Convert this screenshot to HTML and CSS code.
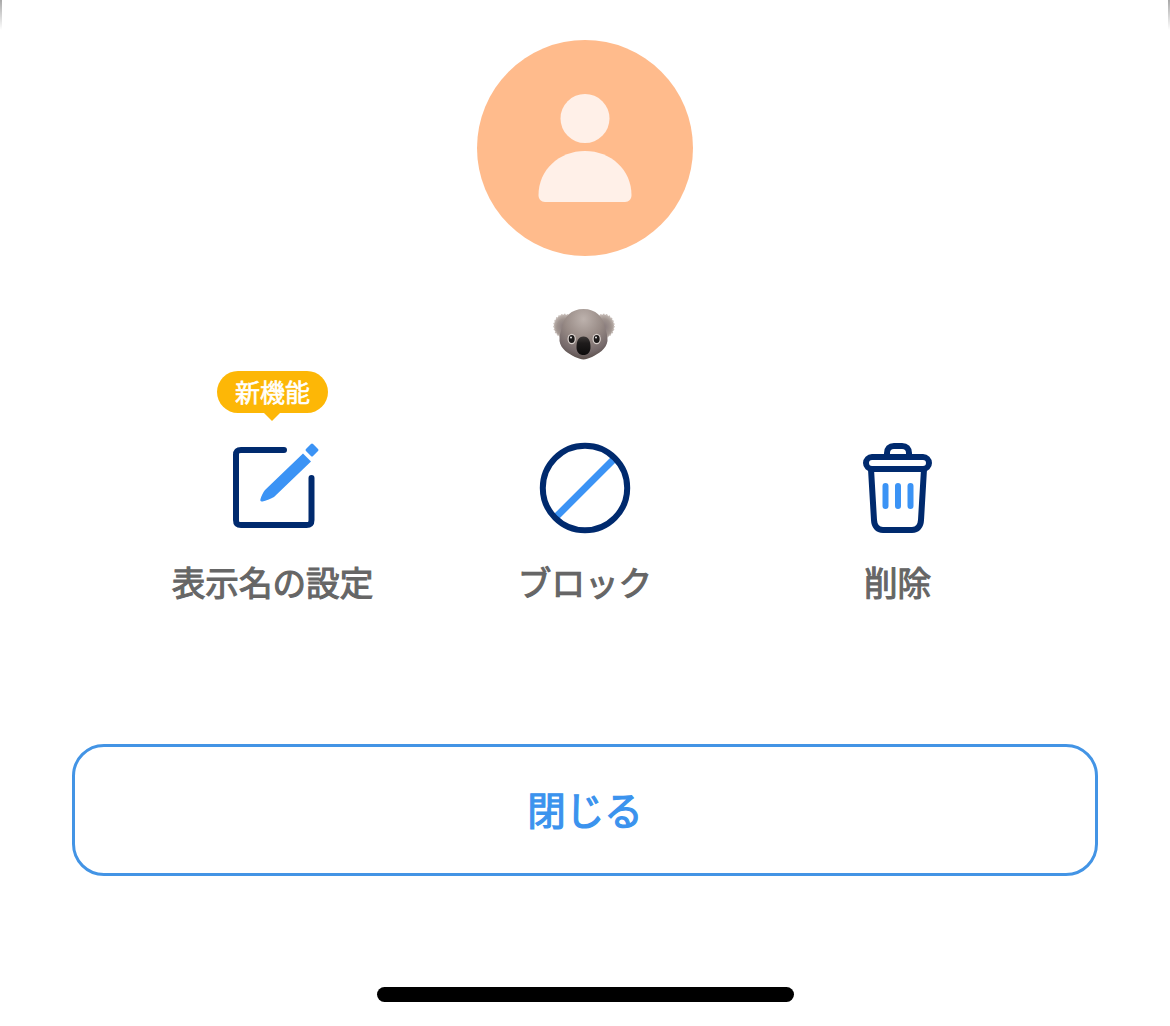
FILE: index.html
```html
<!DOCTYPE html>
<html lang="ja">
<head>
<meta charset="utf-8">
<title>プロフィール</title>
<link rel="stylesheet" href="styles.css">
</head>
<body>
<main class="sheet">
  <div class="avatar">
    <svg class="avatar-person" viewBox="0 0 96 112" aria-hidden="true">
      <circle cx="48" cy="26.500" r="24.500"/>
      <path d="M1.500 103C1.500 78 22 59 48 59C74 59 94.500 78 94.500 103C94.500 107 92 110 88 110H8C4 110 1.500 107 1.500 103Z"/>
    </svg>
  </div>

  <div class="name" role="img" aria-label="コアラ">
    <svg class="koala" viewBox="0 0 62 54" aria-hidden="true">
      <defs>
        <radialGradient id="head" cx="50%" cy="20%" r="78%">
          <stop offset="0" stop-color="#bdb2ad"/>
          <stop offset="0.5" stop-color="#988b86"/>
          <stop offset="0.85" stop-color="#75696a"/>
          <stop offset="1" stop-color="#5f5450"/>
        </radialGradient>
        <radialGradient id="ear" cx="50%" cy="55%" r="60%">
          <stop offset="0" stop-color="#85787a"/>
          <stop offset="0.6" stop-color="#a0948f"/>
          <stop offset="1" stop-color="#c9c0bb"/>
        </radialGradient>
        <linearGradient id="nose" x1="0" y1="0" x2="0" y2="1">
          <stop offset="0" stop-color="#3d3938"/>
          <stop offset="0.35" stop-color="#1f1c1c"/>
          <stop offset="1" stop-color="#0c0b0b"/>
        </linearGradient>
      </defs>
      <ellipse cx="11.500" cy="18" rx="10.500" ry="11.500" fill="url(#ear)" stroke="#c4bab5" stroke-width="1.500" stroke-dasharray="1.500 1.500"/>
      <ellipse cx="50.500" cy="18" rx="10.500" ry="11.500" fill="url(#ear)" stroke="#c4bab5" stroke-width="1.500" stroke-dasharray="1.500 1.500"/>
      <path d="M30.500 1C43 1 50 9 52 19C53 23 55 28 54.500 33C53.500 41 45 46 39 49C35 50.500 33 51.500 30.500 51.500C28 51.500 26 50.500 22 49C16 46 7.500 41 6.500 33C6 28 8 23 9 19C11 9 18 1 30.500 1Z" fill="url(#head)"/>
      <ellipse cx="18.700" cy="31" rx="4.200" ry="5.200" fill="#d8d0cc"/>
      <ellipse cx="43.700" cy="31" rx="4.200" ry="5.200" fill="#d8d0cc"/>
      <ellipse cx="18.700" cy="31" rx="3" ry="4" fill="#1d1a1a"/>
      <ellipse cx="43.700" cy="31" rx="3" ry="4" fill="#1d1a1a"/>
      <circle cx="18" cy="29.500" r="0.900" fill="#fff"/>
      <circle cx="43" cy="29.500" r="0.900" fill="#fff"/>
      <path d="M30.500 28.500C35.500 28.500 37.500 33 37.500 39C37.500 44.500 34.500 47 30.500 47C26.500 47 23.500 44.500 23.500 39C23.500 33 25.500 28.500 30.500 28.500Z" fill="url(#nose)"/>
    </svg>
  </div>

  <div class="actions">
    <div class="action">
      <span class="badge">新機能</span>
      <svg class="icon" viewBox="0 0 96 96" aria-hidden="true">
        <path class="navy" d="M59 10H16C12.500 10 11 11.500 11 15V80C11 83.500 12.500 85 16 85H81.500C85 85 86.500 83.500 86.500 80V38"/>
        <path class="blue-fill" d="M78 13.500L86 21.500L49 57C45 59.500 41 60.500 37.500 61.500C35.500 62 35 60.500 35.500 59C36.500 55.500 38 52.500 40 50Z"/>
        <rect class="blue-fill" x="-5" y="-5" width="10" height="10" rx="1.500" transform="translate(87 10) rotate(45)"/>
      </svg>
      <span class="label">表示名の設定</span>
    </div>
    <div class="action">
      <svg class="icon" viewBox="0 0 96 96" aria-hidden="true">
        <path class="blue" d="M18 78L76 20"/>
        <circle class="navy" cx="48" cy="48" r="42.200"/>
      </svg>
      <span class="label">ブロック</span>
    </div>
    <div class="action">
      <svg class="icon" viewBox="0 0 96 96" aria-hidden="true">
        <path class="navy" d="M37 16V13C37 8.500 39.500 6 44 6H52C56.500 6 59 8.500 59 13V16"/>
        <rect class="navy" x="16" y="17" width="63" height="12" rx="6"/>
        <path class="navy" d="M21 29L24 80C24.300 86 27.500 90 33 90H62C67.500 90 70.700 86 71 80L74 29"/>
        <path class="bar" d="M35.500 46V66M48 46V66M60.500 46V66"/>
      </svg>
      <span class="label">削除</span>
    </div>
  </div>

  <button class="close" type="button">閉じる</button>
  <div class="home-indicator"></div>
</main>
</body>
</html>
```

FILE: styles.css
```css
* {
  box-sizing: border-box;
}

html,
body {
  margin: 0;
  height: 100%;
  background: #fff;
}

body {
  overflow: hidden;
  font-family: "Noto Sans CJK JP", "Noto Sans", sans-serif;
}

.sheet {
  position: relative;
  display: flex;
  flex-direction: column;
  align-items: center;
  height: 1026px;
  padding-top: 40px;
}

.sheet::before,
.sheet::after {
  content: "";
  position: absolute;
  top: 0;
  width: 2px;
  height: 30px;
  background: linear-gradient(to bottom, rgba(110, 110, 110, 0.6), rgba(220, 220, 220, 0));
}

.sheet::before {
  left: 0;
}

.sheet::after {
  right: 0;
}

.avatar {
  display: flex;
  align-items: center;
  justify-content: center;
  width: 216px;
  height: 216px;
  border-radius: 50%;
  background: #ffbb8c;
}

.avatar-person {
  width: 96px;
  height: 112px;
  fill: #fff0e8;
}

.name {
  display: flex;
  justify-content: center;
  height: 54px;
  margin-top: 52px;
}

.koala {
  width: 62px;
  height: 54px;
  margin-right: 2px;
}

.actions {
  display: grid;
  grid-template-columns: repeat(3, 312.5px);
  margin-top: 78px;
}

.action {
  position: relative;
  display: flex;
  flex-direction: column;
  align-items: center;
}

.icon {
  width: 96px;
  height: 96px;
  fill: none;
  stroke-linecap: round;
  stroke-linejoin: round;
}

.navy {
  fill: none;
  stroke: #002a6e;
  stroke-width: 6px;
}

.blue {
  stroke: #3b93f5;
  stroke-width: 7px;
  stroke-linecap: butt;
}

.blue-fill {
  fill: #3b93f5;
}

.bar {
  stroke: #3b93f5;
  stroke-width: 6px;
}

.label {
  margin-top: 22px;
  font-size: 33.600px;
  line-height: 48px;
  font-weight: 400;
  -webkit-text-stroke: 1.100px #666;
  color: #666;
  white-space: nowrap;
}

.badge {
  position: absolute;
  top: -69px;
  left: 50%;
  width: 111px;
  height: 42px;
  margin-left: -55.500px;
  padding-bottom: 2px;
  border-radius: 21px;
  background: #fdb706;
  color: #fff;
  font-size: 25px;
  font-weight: 400;
  -webkit-text-stroke: 0.6px #fff;
  line-height: 40px;
  text-align: center;
  white-space: nowrap;
}

.badge::after {
  content: "";
  position: absolute;
  top: 41px;
  left: 46px;
  border-top: 9px solid #fdb706;
  border-left: 9.500px solid transparent;
  border-right: 9.500px solid transparent;
}

.close {
  display: block;
  width: 1026px;
  height: 132px;
  margin-top: 138px;
  padding-bottom: 6px;
  border: 3px solid #4394e5;
  border-radius: 32px;
  background: #fff;
  color: #3b93ee;
  font-family: inherit;
  font-size: 38.500px;
  font-weight: 400;
  -webkit-text-stroke: 1.200px #3b93ee;
}

.home-indicator {
  width: 417px;
  height: 15px;
  margin-top: 111px;
  border-radius: 8px;
  background: #000;
}
```
